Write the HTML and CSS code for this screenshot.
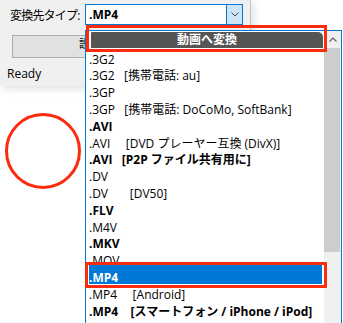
FILE: index.html
```html
<!DOCTYPE html>
<html lang="ja">
<head>
<meta charset="utf-8">
<title>変換先タイプ</title>
<link rel="stylesheet" href="styles.css">
</head>
<body>
<div class="window">
  <div class="toprow">
    <span class="label">変換先タイプ:</span>
    <div class="combo">
      <span class="combo-value">.MP4</span>
      <span class="combo-btn"><svg width="8" height="5" viewBox="0 0 8 5"><path d="M0.5 0.5 L4 4 L7.5 0.5" fill="none" stroke="#444" stroke-width="1"/></svg></span>
    </div>
  </div>
  <div class="btn"><span class="btn-text">設定</span></div>
  <div class="status">Ready</div>
</div>

<div class="dropdown">
  <div class="items">
    <div class="group">動画へ変換</div>
    <div class="rows">
      <div class="row">.3G2</div>
      <div class="row">.3G2   [携帯電話: au]</div>
      <div class="row">.3GP</div>
      <div class="row">.3GP   [携帯電話: DoCoMo, SoftBank]</div>
      <div class="row b">.AVI</div>
      <div class="row">.AVI     [DVD プレーヤー互換 (DivX)]</div>
      <div class="row b">.AVI   [P2P ファイル共有用に]</div>
      <div class="row">.DV</div>
      <div class="row">.DV       [DV50]</div>
      <div class="row b">.FLV</div>
      <div class="row">.M4V</div>
      <div class="row b">.MKV</div>
      <div class="row">.MOV</div>
      <div class="row sel"><span>.MP4</span></div>
      <div class="row">.MP4     [Android]</div>
      <div class="row b">.MP4    [スマートフォン / iPhone / iPod]</div>
    </div>
  </div>
  <div class="scrollbar">
    <div class="sb-up"><svg width="8" height="5" viewBox="0 0 8 5"><path d="M0.5 4.5 L4 1 L7.5 4.5" fill="none" stroke="#606060" stroke-width="1.2"/></svg></div>
    <div class="sb-thumb"></div>
  </div>
</div>

<div class="mark mark-head"></div>
<div class="mark mark-sel"></div>
<svg class="circle" viewBox="0 0 76 76"><circle cx="38" cy="38" r="36.5" fill="none" stroke="#fb2b0e" stroke-width="3"/></svg>
</body>
</html>
```

FILE: styles.css
```css
html, body {
  margin: 0;
  height: 100%;
  overflow: hidden;
  background: #fff;
}
body {
  position: relative;
  font-family: "Open Sans", "Noto Sans CJK JP", sans-serif;
  font-size: 12px;
  color: #000;
}
.window {
  width: 250px;
  height: 86px;
  background: #f0f0f0;
  border-right: 1px solid #c4c4c4;
  box-shadow: 3px 3px 8px rgba(0, 0, 0, 0.12);
  display: flex;
  flex-direction: column;
}
.toprow {
  display: flex;
  align-items: center;
  margin-top: 4px;
  height: 21px;
}
.label {
  width: 75px;
  padding-left: 10px;
  letter-spacing: -0.8px;
  white-space: nowrap;
}
.combo {
  width: 158px;
  height: 21px;
  box-sizing: border-box;
  border: 1px solid #0078d7;
  background: #fff;
  display: flex;
  align-items: center;
}
.combo-value {
  flex: 1;
  padding-left: 3px;
  font-weight: 700;
}
.combo-btn {
  width: 16px;
  height: 19px;
  box-sizing: border-box;
  border-left: 1px solid #0078d7;
  background: #cce4f7;
  display: flex;
  align-items: center;
  justify-content: center;
}
.btn {
  margin: 10px 0 0 12px;
  width: 226px;
  height: 23px;
  box-sizing: border-box;
  border: 1px solid #adadad;
  background: #e1e1e1;
  display: flex;
  align-items: flex-start;
  padding: 2px 0 0 66px;
  white-space: nowrap;
}
.btn-text {
  font-size: 11px;
  line-height: 11px;
}
.status {
  margin: 8px 0 0 7px;
  line-height: 16px;
}
.dropdown {
  position: absolute;
  left: 85px;
  top: 30px;
  width: 257px;
  height: 300px;
  box-sizing: border-box;
  border: 1px solid #0078d7;
  border-bottom: none;
  background: #fff;
  display: flex;
}
.items {
  flex: 1;
  display: flex;
  flex-direction: column;
}
.group {
  margin: 1px 1px 0 5px;
  height: 16px;
  line-height: 16px;
  background: #555;
  color: #fff;
  font-weight: 700;
  text-align: center;
  border-radius: 1px 5px 0 0;
}
.rows {
  padding-top: 3.6px;
}
.row {
  position: relative;
  height: 16.8px;
  line-height: 16.8px;
  padding-left: 3px;
  white-space: pre;
}
.row.b {
  font-weight: 700;
}
.row.sel {
  color: #fff;
  font-weight: 700;
}
.row.sel::before {
  content: "";
  position: absolute;
  left: 3px;
  right: 2px;
  top: -5px;
  height: 19.3px;
  background: #0078d7;
}
.row.sel span {
  position: relative;
}
.scrollbar {
  width: 17px;
  background: #f0f0f0;
  display: flex;
  flex-direction: column;
}
.sb-up {
  height: 17px;
  display: flex;
  align-items: center;
  justify-content: center;
}
.sb-thumb {
  height: 204px;
  margin-right: 1px;
  background: #cdcdcd;
}
.mark {
  position: absolute;
  box-sizing: border-box;
  border: 3px solid #fb2b0e;
}
.mark-head {
  left: 86px;
  top: 25px;
  width: 241px;
  height: 27px;
}
.mark-sel {
  left: 85px;
  top: 262px;
  width: 242px;
  height: 26px;
}
.circle {
  position: absolute;
  left: 5px;
  top: 113px;
  width: 76px;
  height: 76px;
}
```
